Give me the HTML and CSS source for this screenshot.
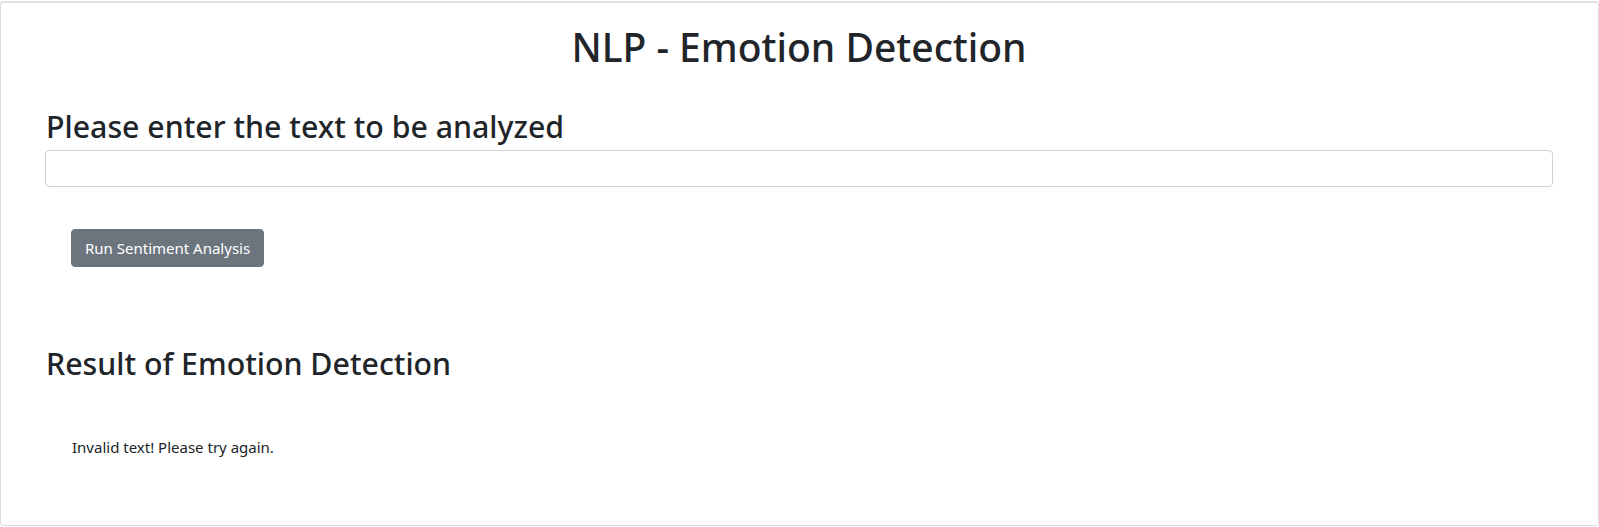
FILE: index.html
```html
<!DOCTYPE html>
<html lang="en">
<head>
<meta charset="utf-8">
<title>NLP - Emotion Detection</title>
<link rel="stylesheet" href="styles.css">
</head>
<body>
<div class="frame">
  <h1 class="title">NLP - Emotion Detection</h1>
  <h2 class="section-title">Please enter the text to be analyzed</h2>
  <input class="text-input" type="text">
  <div class="actions">
    <button class="btn-run" type="button">Run Sentiment Analysis</button>
  </div>
  <h2 class="section-title result-title">Result of Emotion Detection</h2>
  <div class="result">Invalid text! Please try again.</div>
</div>
</body>
</html>
```
FILE: styles.css
```css
html, body {
  margin: 0;
  padding: 0;
  background: #fff;
}
body {
  font-family: "Noto Sans", "Open Sans", sans-serif;
  color: #212529;
  padding-top: 1px;
}
.frame {
  box-sizing: border-box;
  height: 525px;
  border: 1px solid #dcdcdc;
  border-top: 2px solid #e0e0e0;
  border-radius: 4px;
  padding: 0 45px 0 44px;
  display: flex;
  flex-direction: column;
}
.title {
  margin: 20px 0 0;
  text-align: center;
  font-size: 39px;
  font-weight: 500;
  line-height: 48px;
}
.section-title {
  margin: 37px 0 0 1px;
  font-size: 30.3px;
  font-weight: 500;
  line-height: 38px;
}
.text-input {
  box-sizing: border-box;
  width: 100%;
  height: 37px;
  margin: 4px 0 0;
  border: 1px solid #ced4da;
  border-radius: 4px;
  background: #fff;
  font: inherit;
}
.actions {
  padding: 42px 0 0 26px;
}
.btn-run {
  height: 38px;
  padding: 0 13px;
  border: 1px solid #6c757d;
  border-radius: 4px;
  background: #6c757d;
  color: #fff;
  font-family: inherit;
  font-size: 15px;
}
.result-title {
  margin-top: 78px;
}
.result {
  margin: 54px 0 0 27px;
  font-size: 15px;
}
```
